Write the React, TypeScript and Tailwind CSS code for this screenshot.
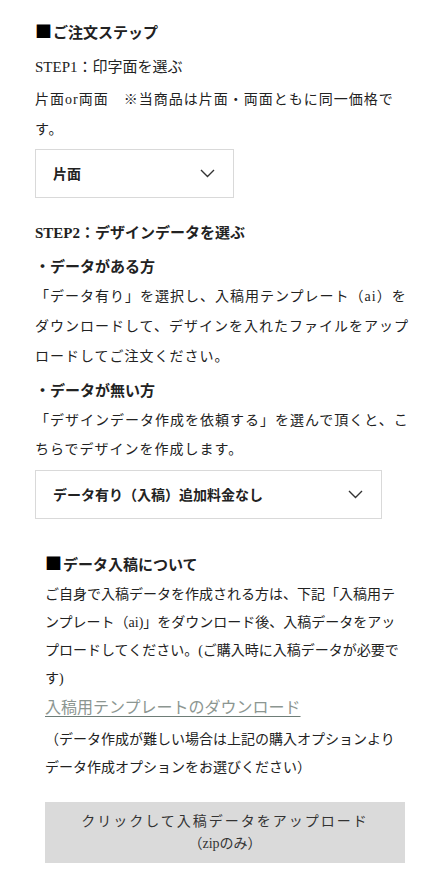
import React from "react";

const serif = { fontFamily: '"Liberation Serif", "Noto Sans CJK JP", serif' };
const cjk = { fontFamily: '"Noto Sans CJK JP", sans-serif' };

function Chevron() {
  return (
    <svg width="15" height="9" viewBox="0 0 15 9" fill="none" className="shrink-0">
      <polyline points="1,1 7.5,7.5 14,1" stroke="#333" strokeWidth="1.4" />
    </svg>
  );
}

function SelectBox({ label, className }: { label: string; className: string }) {
  return (
    <div
      className={`flex items-center justify-between border border-[#d9d9d9] bg-white pl-[17px] text-[14px] font-bold text-[#222] ${className}`}
      style={cjk}
    >
      <span>{label}</span>
      <Chevron />
    </div>
  );
}

function Square() {
  return (
    <span className="mr-[1px] text-[17px] leading-none text-black" style={cjk}>
      ■
    </span>
  );
}

export default function App() {
  return (
    <div className="min-h-[890px] bg-white text-[#222]" style={serif}>
      <div className="w-[405px] pl-[35px] pt-[18px]">
        {/* STEP1 */}
        <h2 className="text-[15px] font-bold leading-[30px]">
          <Square />
          ご注文ステップ
        </h2>
        <p className="mt-[4px] text-[15px] leading-[30px]">STEP1：印字面を選ぶ</p>
        <p className="mt-[3px] text-[14px] leading-[30px] tracking-[1px]">
          片面or両面　※当商品は片面・両面ともに同一価格です。
        </p>
        <SelectBox label="片面" className="mt-[4px] h-[49px] w-[199px] pr-[18px]" />

        {/* STEP2 */}
        <p className="mt-[20px] text-[15px] font-bold leading-[30px]">STEP2：デザインデータを選ぶ</p>
        <p className="mt-[4px] text-[15px] font-bold leading-[30px]">・データがある方</p>
        <p className="w-[378px] text-[14px] leading-[30px] tracking-[1px]">
          「データ有り」を選択し、入稿用テンプレート（ai）をダウンロードして、デザインを入れたファイルをアップロードしてご注文ください。
        </p>
        <p className="mt-[4px] text-[15px] font-bold leading-[30px]">・データが無い方</p>
        <p className="w-[378px] text-[14px] leading-[29px] tracking-[1px]">
          「デザインデータ作成を依頼する」を選んで頂くと、こちらでデザインを作成します。
        </p>
        <SelectBox label="データ有り（入稿）追加料金なし" className="mt-[6px] h-[49px] w-[347px] pr-[18px]" />

        {/* data upload */}
        <div className="ml-[10px] mt-[32px]">
          <h3 className="text-[15px] font-bold leading-[28px]">
            <Square />
            データ入稿について
          </h3>
          <p className="mt-[2px] text-[14px] leading-[28px]">
            ご自身で入稿データを作成される方は、下記「入稿用テンプレート（ai)」をダウンロード後、入稿データをアップロードしてください。(ご購入時に入稿データが必要です)
          </p>
          <a
            href="#"
            className="block w-fit text-[16px] leading-[30px] text-[#8c9691] underline decoration-[#6e7d77] underline-offset-[3px]"
          >
            入稿用テンプレートのダウンロード
          </a>
          <p className="mt-[3px] text-[14px] leading-[28px]">
            （データ作成が難しい場合は上記の購入オプションよりデータ作成オプションをお選びください）
          </p>
          <button
            type="button"
            className="mt-[20px] flex h-[61px] w-[360px] flex-col items-center justify-center bg-[#dadada] text-[14px] leading-[22px] tracking-[2px] text-[#333]"
          >
            <span>クリックして入稿データをアップロード</span>
            <span className="tracking-normal">（zipのみ）</span>
          </button>
        </div>
      </div>
    </div>
  );
}
